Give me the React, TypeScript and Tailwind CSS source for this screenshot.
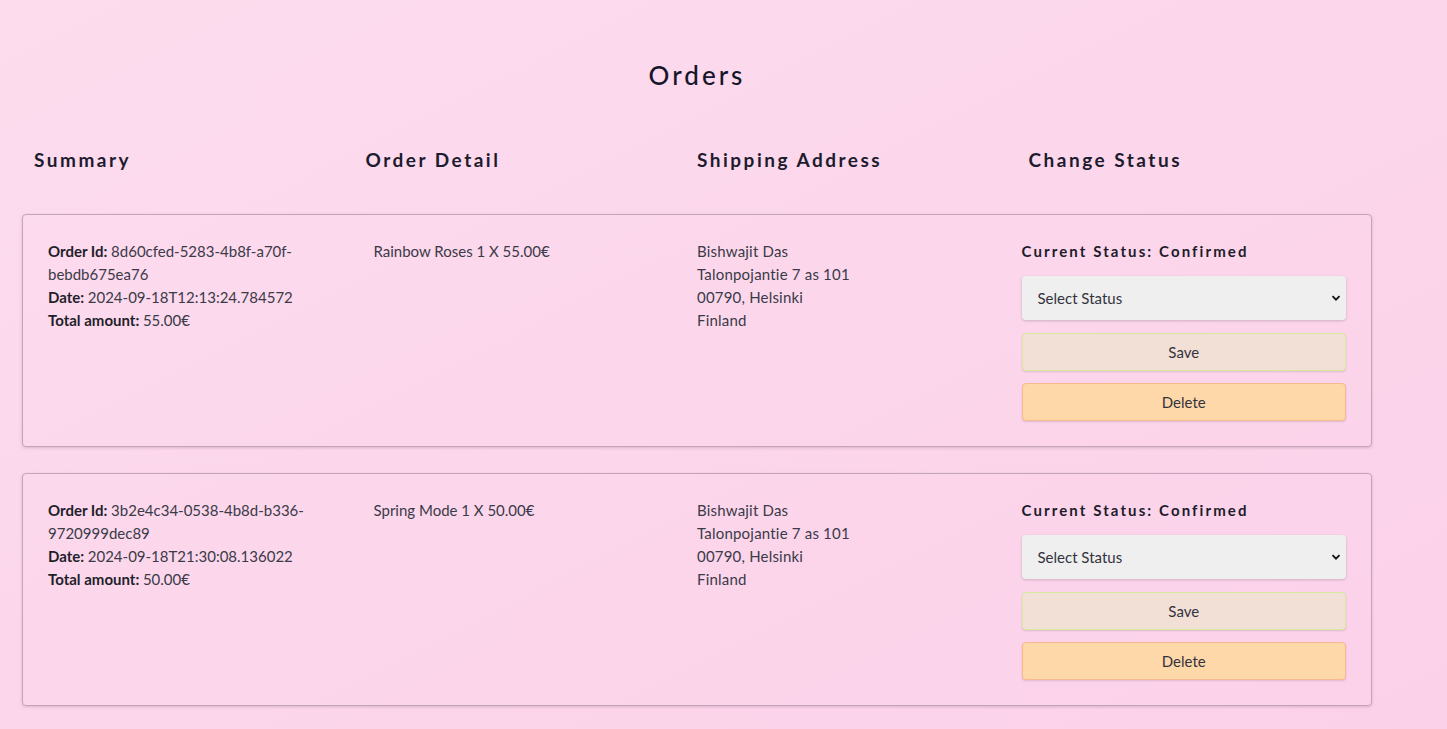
import { useState } from "react";

interface Order {
    id: string;
    date: string;
    total: string;
    item: string;
}

const orders: Order[] = [
    {
        id: "8d60cfed-5283-4b8f-a70f-bebdb675ea76",
        date: "2024-09-18T12:13:24.784572",
        total: "55.00€",
        item: "Rainbow Roses 1 X 55.00€",
    },
    {
        id: "3b2e4c34-0538-4b8d-b336-9720999dec89",
        date: "2024-09-18T21:30:08.136022",
        total: "50.00€",
        item: "Spring Mode 1 X 50.00€",
    },
];

const OrderCard = ({ order }: { order: Order }) => {
    const [status, setStatus] = useState("");
    return (
        <div className="grid grid-cols-4 border border-[#c4a4b8] rounded-[4px] p-[25px] shadow-[0_1px_3px_rgba(120,80,100,0.25)] text-[15px] leading-[23px] text-[#3a3a48]">
            <div className="pr-6">
                <p>
                    <b className="text-[#1f1f2b]">Order Id: </b>
                    {order.id}
                </p>
                <p>
                    <b className="text-[#1f1f2b]">Date: </b>
                    {order.date}
                </p>
                <p>
                    <b className="text-[#1f1f2b]">Total amount: </b>
                    {order.total}
                </p>
            </div>
            <div className="pl-[1px]">
                <p>{order.item}</p>
            </div>
            <div>
                <p className="tracking-[0.2px]">Bishwajit Das</p>
                <p className="tracking-[0.2px]">Talonpojantie 7 as 101</p>
                <p className="tracking-[0.2px]">00790, Helsinki</p>
                <p className="tracking-[0.2px]">Finland</p>
            </div>
            <div className="flex flex-col">
                <p className="font-bold tracking-[2.1px] text-[#1c1c2a]">Current Status: Confirmed</p>
                <div className="relative mt-[13px]">
                    <select
                        value={status}
                        onChange={(e) => setStatus(e.target.value)}
                        className="appearance-none w-full h-[44px] bg-[#efefef] rounded-[4px] pl-4 pr-8 text-[15px] text-[#333340] shadow-[0_1px_3px_rgba(0,0,0,0.18)] focus:outline-none"
                    >
                        <option value="">Select Status</option>
                        <option value="confirmed">Confirmed</option>
                        <option value="shipped">Shipped</option>
                        <option value="delivered">Delivered</option>
                    </select>
                    <svg
                        className="absolute right-[5px] top-1/2 -translate-y-1/2 pointer-events-none"
                        width="10"
                        height="10"
                        viewBox="0 0 10 10"
                    >
                        <path d="M1.5 3.2 L5 6.7 L8.5 3.2" fill="none" stroke="#111" strokeWidth="1.8" />
                    </svg>
                </div>
                <button className="mt-[13px] h-[38px] rounded-[4px] bg-[#f2e0d6] border border-[#d8ea9c] shadow-[0_1px_2px_rgba(0,0,0,0.12)] text-[15px] leading-[36px] text-[#333340]">
                    Save
                </button>
                <button className="mt-[12px] h-[38px] rounded-[4px] bg-[#fed8a8] border border-[#f7b98e] shadow-[0_1px_2px_rgba(0,0,0,0.12)] text-[15px] leading-[36px] text-[#333340]">
                    Delete
                </button>
            </div>
        </div>
    );
};

export default function App() {
    return (
        <div
            className="min-h-screen bg-gradient-to-br from-[#fddcee] to-[#fbd1e9]"
            style={{ fontFamily: "Lato, 'Open Sans', sans-serif" }}
        >
            <div className="w-[1394px] px-[22px] pb-6">
                <h1 className="pt-[57px] text-center text-[26px] leading-9 font-medium tracking-[3px] text-[#16162a]">
                    Orders
                </h1>
                <div className="grid grid-cols-4 px-3 mt-[53px] text-[19px] leading-7 font-bold tracking-[2.5px] text-[#1c1c2e]">
                    <h2>Summary</h2>
                    <h2>Order Detail</h2>
                    <h2>Shipping Address</h2>
                    <h2>Change Status</h2>
                </div>
                <div className="mt-[40px] flex flex-col gap-[26px]">
                    {orders.map((o) => (
                        <OrderCard key={o.id} order={o} />
                    ))}
                </div>
            </div>
        </div>
    );
}
